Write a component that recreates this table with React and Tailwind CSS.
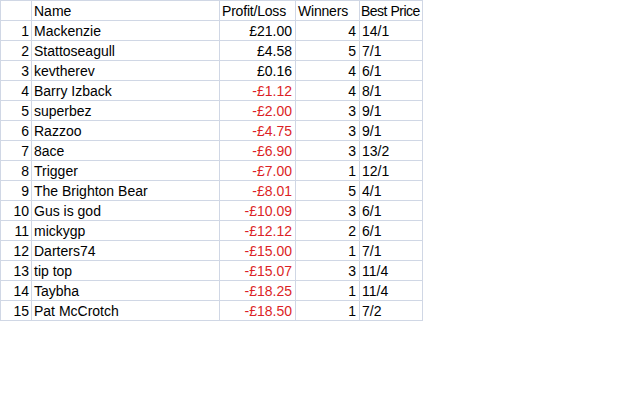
import React from 'react';

const rows = [
  ['Mackenzie', '£21.00', 4, '14/1'],
  ['Stattoseagull', '£4.58', 5, '7/1'],
  ['kevtherev', '£0.16', 4, '6/1'],
  ['Barry Izback', '-£1.12', 4, '8/1'],
  ['superbez', '-£2.00', 3, '9/1'],
  ['Razzoo', '-£4.75', 3, '9/1'],
  ['8ace', '-£6.90', 3, '13/2'],
  ['Trigger', '-£7.00', 1, '12/1'],
  ['The Brighton Bear', '-£8.01', 5, '4/1'],
  ['Gus is god', '-£10.09', 3, '6/1'],
  ['mickygp', '-£12.12', 2, '6/1'],
  ['Darters74', '-£15.00', 1, '7/1'],
  ['tip top', '-£15.07', 3, '11/4'],
  ['Taybha', '-£18.25', 1, '11/4'],
  ['Pat McCrotch', '-£18.50', 1, '7/2'],
];

const cell = 'h-5 border-r border-b border-[#d0d7e5] flex items-center leading-none whitespace-nowrap';

function App() {
  return (
    <div className="w-[640px] h-[400px] bg-white text-black text-[14px]" style={{ fontFamily: '"Liberation Sans", Arial, sans-serif' }}>
      <div className="grid grid-cols-[31px_188px_76px_64px_63px] w-max border-l border-t border-[#d0d7e5]">
        <div className={cell}></div>
        <div className={`${cell} pl-[2px]`}>Name</div>
        <div className={`${cell} pl-[2px] tracking-[-0.2px]`}>Profit/Loss</div>
        <div className={`${cell} pl-[2px] tracking-[-0.2px]`}>Winners</div>
        <div className={`${cell} pl-[1px] tracking-[-0.5px]`}>Best Price</div>
        {rows.map(([name, pl, wins, price], i) => (
          <React.Fragment key={name}>
            <div className={`${cell} justify-end pr-[2px]`}>{i + 1}</div>
            <div className={`${cell} pl-[2px]`}>{name}</div>
            <div className={`${cell} justify-end pr-[3px] ${pl.startsWith('-') ? 'text-[#dc1f26]' : ''}`}>{pl}</div>
            <div className={`${cell} justify-end pr-[3px]`}>{wins}</div>
            <div className={`${cell} pl-[2px]`}>{price}</div>
          </React.Fragment>
        ))}
      </div>
    </div>
  );
}

export default App;
